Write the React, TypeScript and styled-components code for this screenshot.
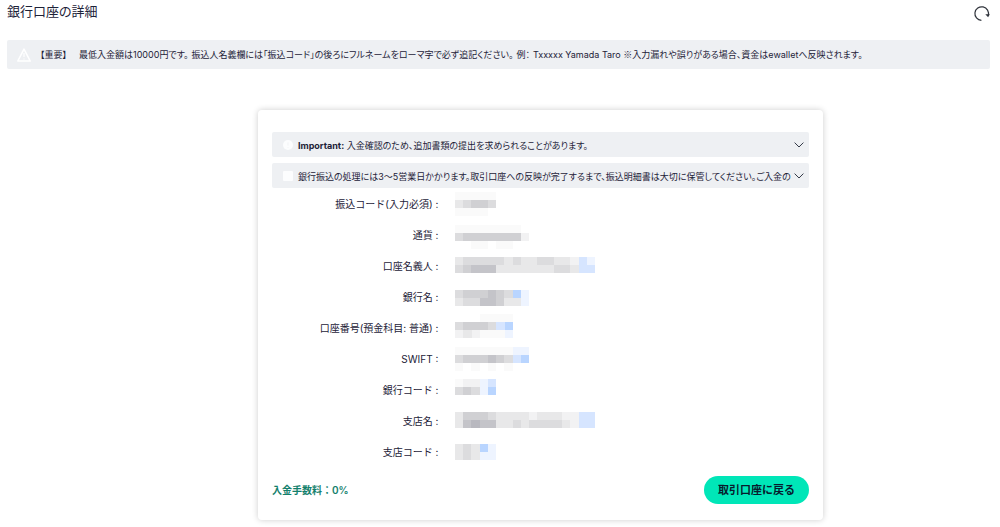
import React, { useState } from "react";
import styled, { createGlobalStyle } from "styled-components";

const GlobalStyle = createGlobalStyle`
  * { box-sizing: border-box; }
  body {
    margin: 0;
    background: #fff;
    color: #1d2238;
    font-family: Inter, "Noto Sans CJK JP", sans-serif;
  }
  button { font: inherit; color: inherit; border: 0; cursor: pointer; }
`;

const Page = styled.div`
  padding: 0 10px 6px 7px;
`;

const Header = styled.header`
  display: flex;
  align-items: flex-start;
  justify-content: space-between;
  height: 40px;
`;

const Title = styled.h1`
  margin: 1px 0 0;
  font-size: 13px;
  line-height: 20px;
  font-weight: 400;
  font-feature-settings: "palt";
`;

const RefreshButton = styled.button`
  display: flex;
  padding: 5px 0 0;
  background: none;
`;

const Alert = styled.div`
  display: flex;
  align-items: center;
  gap: 8px;
  min-height: 29px;
  padding: 0 9px;
  border-radius: 2px;
  background: #eef0f3;
  font-size: 9px;
  line-height: 14px;
  font-feature-settings: "palt";

  p { margin: 0; }
  svg { flex: none; }
`;

const Phrase = styled.span`
  margin-right: 3px;
`;

const ReferenceMark = styled.span`
  font-family: "Noto Sans CJK JP", sans-serif;
`;

const Card = styled.main`
  max-width: 565px;
  margin: 41px 17% 0 auto;
  padding: 22px 14px 16px;
  border-radius: 4px;
  background: #fff;
  box-shadow: 0 0 6px rgba(0, 0, 0, 0.2);
`;

const Notices = styled.div`
  display: grid;
  gap: 6px;
`;

const NoticeBar = styled.button`
  display: flex;
  align-items: center;
  gap: 1px;
  width: 100%;
  min-width: 0;
  height: 25px;
  padding: 0 5px 0 11px;
  border-radius: 2px;
  background: #eef0f3;
  text-align: left;

  svg { flex: none; }
`;

const NoticeText = styled.span`
  flex: 1;
  min-width: 0;
  padding: 2px 0 0 4px;
  overflow: hidden;
  white-space: nowrap;
  font-size: 9px;
  line-height: 14px;
  font-feature-settings: "palt";
`;

const Details = styled.dl`
  margin: 0;
`;

const DetailRow = styled.div`
  display: grid;
  grid-template-columns: 31% 1fr;
  column-gap: 17px;
  align-items: center;
  height: 31px;
  font-size: 10px;
  line-height: 16px;

  dt { text-align: right; white-space: nowrap; }
  dd { display: flex; margin: 0; }
`;

const Footer = styled.footer`
  display: flex;
  align-items: center;
  justify-content: space-between;
  margin-top: 9px;
`;

const Fee = styled.span`
  color: #12806c;
  font-size: 10px;
  font-weight: 600;
  line-height: 16px;
`;

const BackButton = styled.button`
  height: 28px;
  padding: 0 14px;
  border-radius: 14px;
  background: #00e6b8;
  color: #071b2e;
  font-size: 11px;
  font-weight: 700;
  line-height: 16px;
`;

type Mask = { top: number; cells: string[] };

const SHADES: Record<string, string> = {
  ".": "none",
  a: "#fafafa",
  b: "#f2f2f3",
  c: "#e8e8e9",
  d: "#dcdcde",
  e: "#d0d0d3",
  f: "#c4c4c9",
  g: "#b8b8bf",
  x: "#eef4ff",
  y: "#d6e5ff",
  z: "#b9d5ff",
};

/* Mosaic that hides a private value; each letter is the shade of one tile. */
function Mosaic({ top, cells }: Mask) {
  const columns = cells[0].length;
  const width = Math.round(columns * 8.23);
  const edge = (i: number) => Math.round((i * width) / columns);
  return (
    <svg width={width} height="31" viewBox={`0 0 ${width} 31`} shapeRendering="crispEdges" role="img" aria-label="非表示">
      {cells.flatMap((line, r) =>
        [...line].map((shade, c) => (
          <rect key={`${r}-${c}`} x={edge(c)} y={top + r * 8} width={edge(c + 1) - edge(c)} height="8" fill={SHADES[shade]} />
        ))
      )}
    </svg>
  );
}

const ROWS: { label: string; mask: Mask }[] = [
  { label: "振込コード(入力必須) :", mask: { top: 4, cells: ["aaaaa", "cdeed", "aaaa."] } },
  { label: "通貨 :", mask: { top: 6, cells: ["aaaaaaaa.", "deeeeeeeb", "..aa.aa.."] } },
  { label: "口座名義人 :", mask: { top: 7, cells: ["cdddddcdccddccbyx", "defffcccccccddcyy"] } },
  { label: "銀行名 :", mask: { top: 9, cells: ["deeefedzx", "cddffeccx"] } },
  { label: "口座番号(預金科目: 普通) :", mask: { top: 2, cells: ["...aaaa", "deeedyz", "bcbaaax"] } },
  { label: "SWIFT :", mask: { top: 4, cells: ["aaaaaaaxx", "deeefedyz", "a.a.a.a.."] } },
  { label: "銀行コード :", mask: { top: 5, cells: ["abbxy", "dedxz"] } },
  { label: "支店名 :", mask: { top: 7, cells: ["ceeedccccbcccbbyy", "cfgffccdcddddcbyy"] } },
  { label: "支店コード :", mask: { top: 8, cells: ["cdczx", "cdcxx"] } },
];

function Chevron() {
  return (
    <svg width="10" height="6" viewBox="0 0 10 6" fill="none" stroke="#343a48" strokeWidth="1" aria-hidden="true">
      <path d="M.6 .6 5 5 9.4 .6" />
    </svg>
  );
}

function Notice({ square, children }: { square?: boolean; children: React.ReactNode }) {
  const [open, setOpen] = useState(false);
  return (
    <NoticeBar type="button" aria-expanded={open} onClick={() => setOpen(!open)}>
      <svg width="10" height="10" viewBox="0 0 10 10" fill="#fcfdfe" aria-hidden="true">
        {square ? (
          <rect width="10" height="10" rx="1" />
        ) : (
          <>
            <circle cx="5" cy="5" r="5" />
            <path d="M5 2.4v3.2M5 7v.8" stroke="#f1f3f5" />
          </>
        )}
      </svg>
      <NoticeText>{children}</NoticeText>
      <Chevron />
    </NoticeBar>
  );
}

export default function App() {
  return (
    <>
      <GlobalStyle />
      <Page>
        <Header>
          <Title>銀行口座の詳細</Title>
          <RefreshButton type="button" aria-label="更新">
            <svg width="17" height="17" viewBox="0 0 17 17" fill="none">
              <path d="M8.4 15.4A6.8 6.8 0 1 1 15.2 10.6" stroke="#30343c" strokeWidth="1.2" />
              <path d="M12.3 9.2h4.6l-1.8 3z" fill="#30343c" />
            </svg>
          </RefreshButton>
        </Header>

        <Alert role="alert">
          <svg width="16" height="16" viewBox="0 0 16 16" fill="none" stroke="#fff" aria-hidden="true">
            <path d="M8 2.2 14.2 14H1.8z" strokeWidth="1.6" strokeLinejoin="round" />
            <path d="M8 6v4M8 11.4v1.2" strokeWidth="1.2" />
          </svg>
          <p>
            <Phrase>【重要】　</Phrase>
            <Phrase>最低入金額は10000円です。</Phrase>
            <Phrase>振込人名義欄には「振込コード」の後ろにフルネームをローマ字で必ず追記ください。</Phrase>
            <Phrase>例：</Phrase>
            Txxxxx Yamada Taro <ReferenceMark>※</ReferenceMark>入力漏れや誤りがある場合、資金はewalletへ反映されます。
          </p>
        </Alert>

        <Card>
          <Notices>
            <Notice>
              <strong>Important:</strong> 入金確認のため、追加書類の提出を求められることがあります。
            </Notice>
            <Notice square>
              銀行振込の処理には3～5営業日かかります。取引口座への反映が完了するまで、振込明細書は大切に保管してください。ご入金の
            </Notice>
          </Notices>

          <Details>
            {ROWS.map(({ label, mask }) => (
              <DetailRow key={label}>
                <dt>{label}</dt>
                <dd>
                  <Mosaic {...mask} />
                </dd>
              </DetailRow>
            ))}
          </Details>

          <Footer>
            <Fee>入金手数料：0%</Fee>
            <BackButton type="button">取引口座に戻る</BackButton>
          </Footer>
        </Card>
      </Page>
    </>
  );
}
